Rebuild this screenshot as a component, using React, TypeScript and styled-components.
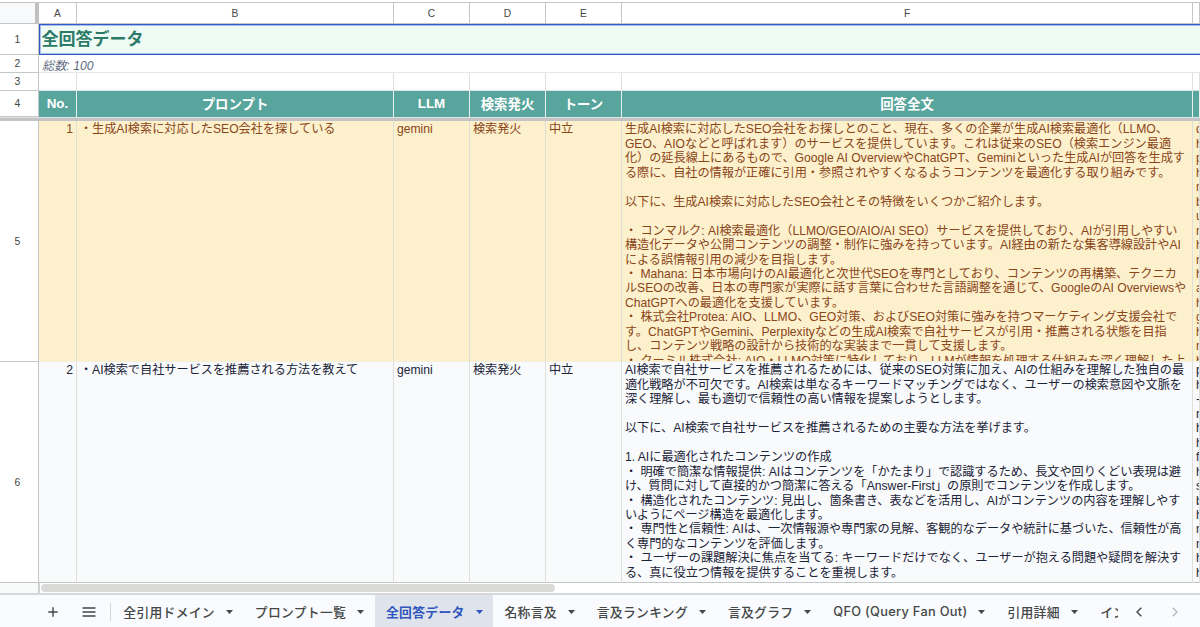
import React from 'react';
import styled, { createGlobalStyle, css } from 'styled-components';

const GlobalStyle = createGlobalStyle`
  * { box-sizing: border-box; }
  body { margin: 0; background: #fff; overflow: hidden; }
`;

const sans = `'Liberation Sans', 'Noto Sans CJK JP', sans-serif`;

const Sheet = styled.div`
  width: 1200px;
  height: 627px;
  overflow: hidden;
  display: flex;
  flex-direction: column;
  background: #fff;
  font-family: ${sans};
`;

const Row = styled.div<{ $h: number }>`
  display: grid;
  grid-template-columns: 39px 38px 317px 76px 76px 76px 571px 7px;
  grid-template-rows: 100%;
  height: ${(p) => p.$h}px;
  flex: none;
  overflow: hidden;
`;

const HeaderRow = styled(Row)`
  margin-top: 2px;
  border-top: 1px solid #c4c7c5;
`;

const Corner = styled.div`
  background: #f8f9fa;
  border-right: 4px solid #c0c0c0;
  border-bottom: 1px solid #c4c7c5;
`;

const ColumnHead = styled.div`
  display: flex;
  align-items: center;
  justify-content: center;
  font-size: 10.2px;
  color: #444746;
  border-right: 1px solid #c4c7c5;
  border-bottom: 1px solid #c4c7c5;
`;

const RowHead = styled.div<{ $drop?: number }>`
  display: flex;
  align-items: center;
  justify-content: center;
  font-size: 10.4px;
  line-height: 12px;
  color: #444746;
  padding: ${(p) => p.$drop ?? 0}px 3px 0 0;
  border-right: 1px solid #c4c7c5;
  border-bottom: 1px solid #c4c7c5;
`;

const TitleCell = styled.div`
  grid-column: 2 / -1;
  display: flex;
  align-items: center;
  background: #effcf5;
  border: solid #3259c7;
  border-width: 1px 0 1px 1px;
  box-shadow: inset 1px 1px 0 #a9c0ee, inset 0 -1px 0 #a9c0ee;
  padding: 0 0 4px 1.5px;
  color: #2c7a68;
  font-size: 17px;
  font-weight: 700;
`;

const SubtitleCell = styled.div`
  grid-column: 2 / -1;
  padding: 3px 0 0 3px;
  border-bottom: 1px solid #e6e7e8;
  color: #5f6b84;
  font-size: 12.2px;
  line-height: 16px;
  font-style: italic;
`;

const EmptyCell = styled.div`
  border-right: 1px solid #dfe0e1;
  border-bottom: 1px solid #dfe0e1;
`;

const HeadCell = styled.div`
  display: flex;
  align-items: center;
  justify-content: center;
  background: #58a59d;
  border-right: 1px solid #e6f0ef;
  padding-bottom: 2px;
  color: #fff;
  font-size: 13.4px;
  font-weight: 700;
  white-space: nowrap;
`;

const FreezeBar = styled.div`
  flex: none;
  height: 4px;
  background: #c2c3c4;
  border-top: 1px solid #dde3e2;
`;

type Tone = 'warm' | 'cool';

const tones = {
  warm: css`
    background: #fdf1cd;
    color: #8a4519;
  `,
  cool: css`
    background: #f8fafc;
    color: #1c2438;
  `,
};

const DataCell = styled.div<{ $tone: Tone; $right?: boolean }>`
  ${(p) => tones[p.$tone]}
  border-right: 1px solid #dfdfda;
  border-bottom: 1px solid ${(p) => (p.$tone === 'cool' ? '#c4c7c5' : '#f3eedd')};
  padding: 1.3px 3px 0 2.9px;
  font-size: 12.17px;
  line-height: 14.47px;
  text-align: ${(p) => (p.$right ? 'right' : 'left')};
  overflow: hidden;
  white-space: pre;
`;

const Line = styled.div`
  height: 14.47px;
`;

const ScrollTrack = styled.div`
  flex: none;
  display: flex;
  height: 12px;
  border-bottom: 2px solid #d5d7d9;
`;

const ScrollGutter = styled.div`
  width: 40px;
  border-right: 2px solid #cfd1d2;
  background: #f9fafa;
`;

const ScrollThumb = styled.div`
  width: 514px;
  height: 8px;
  margin: 1px 0 0 1px;
  border-radius: 4px;
  background: #dadbd9;
`;

const Tabs = styled.div`
  flex: 1;
  display: flex;
  background: #f9fbfe;
  color: #444746;
  font-family: Inter, 'Noto Sans CJK JP', sans-serif;
`;

const Tool = styled.div<{ $w: number; $left?: number }>`
  width: ${(p) => p.$w}px;
  margin-left: ${(p) => p.$left ?? 0}px;
  height: 34px;
  flex: none;
  display: flex;
  align-items: center;
  justify-content: center;
`;

const Divider = styled.div`
  width: 1px;
  height: 18px;
  margin: 8px 0.9px 0 2.5px;
  background: #d3d6da;
`;

const Tab = styled.div<{ $active?: boolean }>`
  display: flex;
  align-items: center;
  height: 33px;
  padding: 0 10.6px 0 11.4px;
  font-size: 12.8px;
  letter-spacing: 0.3px;
  font-weight: ${(p) => (p.$active ? 700 : 500)};
  color: ${(p) => (p.$active ? '#2f56bd' : '#444746')};
  background: ${(p) => (p.$active ? '#dfe4ec' : 'transparent')};
  white-space: nowrap;
`;

const Caret = styled.svg`
  margin-left: 10.9px;
  flex: none;
`;

const ClippedTab = styled.div`
  width: 29.5px;
  margin-right: 1.5px;
  flex: none;
  height: 33px;
  padding-left: 12px;
  display: flex;
  align-items: center;
  overflow: hidden;
  white-space: nowrap;
  font-size: 12.8px;
  font-weight: 500;
`;

const columns = ['A', 'B', 'C', 'D', 'E', 'F', ''];
const heads = ['No.', 'プロンプト', 'LLM', '検索発火', 'トーン', '回答全文', ''];

interface Answer {
  row: number;
  height: number;
  drop: number;
  tone: Tone;
  prompt: string;
  body: string[];
  next: string[];
}

const answers: Answer[] = [
  {
    row: 5,
    height: 241,
    drop: 2,
    tone: 'warm',
    prompt: '・生成AI検索に対応したSEO会社を探している',
    body: [
      '生成AI検索に対応したSEO会社をお探しとのこと、現在、多くの企業が生成AI検索最適化（LLMO、',
      'GEO、AIOなどと呼ばれます）のサービスを提供しています。これは従来のSEO（検索エンジン最適',
      '化）の延長線上にあるもので、Google AI OverviewやChatGPT、Geminiといった生成AIが回答を生成す',
      'る際に、自社の情報が正確に引用・参照されやすくなるようコンテンツを最適化する取り組みです。',
      '',
      '以下に、生成AI検索に対応したSEO会社とその特徴をいくつかご紹介します。',
      '',
      '・ コンマルク: AI検索最適化（LLMO/GEO/AIO/AI SEO）サービスを提供しており、AIが引用しやすい',
      '構造化データや公開コンテンツの調整・制作に強みを持っています。AI経由の新たな集客導線設計やAI',
      'による誤情報引用の減少を目指します。',
      '・ Mahana: 日本市場向けのAI最適化と次世代SEOを専門としており、コンテンツの再構築、テクニカ',
      'ルSEOの改善、日本の専門家が実際に話す言葉に合わせた言語調整を通じて、GoogleのAI Overviewsや',
      'ChatGPTへの最適化を支援しています。',
      '・ 株式会社Protea: AIO、LLMO、GEO対策、およびSEO対策に強みを持つマーケティング支援会社で',
      'す。ChatGPTやGemini、Perplexityなどの生成AI検索で自社サービスが引用・推薦される状態を目指',
      'し、コンテンツ戦略の設計から技術的な実装まで一貫して支援します。',
      '・ クーミル株式会社: AIO・LLMO対策に特化しており、LLMが情報を処理する仕組みを深く理解した上',
    ],
    next: ['d', 'h', 'p', 'h', 'n', 'b', 'u', 'n', 'h', 'n', 'h', 'a', 'h', 'g', 'h', 'n', 'h'],
  },
  {
    row: 6,
    height: 221,
    drop: 22,
    tone: 'cool',
    prompt: '・AI検索で自社サービスを推薦される方法を教えて',
    body: [
      'AI検索で自社サービスを推薦されるためには、従来のSEO対策に加え、AIの仕組みを理解した独自の最',
      '適化戦略が不可欠です。AI検索は単なるキーワードマッチングではなく、ユーザーの検索意図や文脈を',
      '深く理解し、最も適切で信頼性の高い情報を提案しようとします。',
      '',
      '以下に、AI検索で自社サービスを推薦されるための主要な方法を挙げます。',
      '',
      '1. AIに最適化されたコンテンツの作成',
      '・ 明確で簡潔な情報提供: AIはコンテンツを「かたまり」で認識するため、長文や回りくどい表現は避',
      'け、質問に対して直接的かつ簡潔に答える「Answer-First」の原則でコンテンツを作成します。',
      '・ 構造化されたコンテンツ: 見出し、箇条書き、表などを活用し、AIがコンテンツの内容を理解しやす',
      'いようにページ構造を最適化します。',
      '・ 専門性と信頼性: AIは、一次情報源や専門家の見解、客観的なデータや統計に基づいた、信頼性が高',
      'く専門的なコンテンツを評価します。',
      '・ ユーザーの課題解決に焦点を当てる: キーワードだけでなく、ユーザーが抱える問題や疑問を解決す',
      'る、真に役立つ情報を提供することを重視します。',
    ],
    next: ['p', 'h', '-', 'r', 'h', 'h', 'fi', 'h', 's', 'b', 'h', 'n', 'n', 'h', 'h'],
  },
];

const tabs = ['全引用ドメイン', 'プロンプト一覧', '全回答データ', '名称言及', '言及ランキング', '言及グラフ', 'QFO (Query Fan Out)', '引用詳細'];

const Lines = ({ items }: { items: string[] }) => (
  <>
    {items.map((t, i) => (
      <Line key={i}>{t}</Line>
    ))}
  </>
);

export default function App() {
  return (
    <Sheet>
      <GlobalStyle />
      <HeaderRow $h={22}>
        <Corner />
        {columns.map((c, i) => (
          <ColumnHead key={i}>{c}</ColumnHead>
        ))}
      </HeaderRow>
      <Row $h={31}>
        <RowHead $drop={2}>1</RowHead>
        <TitleCell>全回答データ</TitleCell>
      </Row>
      <Row $h={18}>
        <RowHead $drop={1}>2</RowHead>
        <SubtitleCell>総数: 100</SubtitleCell>
      </Row>
      <Row $h={18}>
        <RowHead $drop={1}>3</RowHead>
        {columns.map((_, i) => (
          <EmptyCell key={i} />
        ))}
      </Row>
      <Row $h={26}>
        <RowHead>4</RowHead>
        {heads.map((h, i) => (
          <HeadCell key={i}>{h}</HeadCell>
        ))}
      </Row>
      <FreezeBar />
      {answers.map((a, i) => (
        <Row key={a.row} $h={a.height}>
          <RowHead $drop={a.drop}>{a.row}</RowHead>
          <DataCell $tone={a.tone} $right>{i + 1}</DataCell>
          <DataCell $tone={a.tone}>{a.prompt}</DataCell>
          <DataCell $tone={a.tone}>gemini</DataCell>
          <DataCell $tone={a.tone}>検索発火</DataCell>
          <DataCell $tone={a.tone}>中立</DataCell>
          <DataCell $tone={a.tone}><Lines items={a.body} /></DataCell>
          <DataCell $tone={a.tone}><Lines items={a.next} /></DataCell>
        </Row>
      ))}
      <ScrollTrack>
        <ScrollGutter />
        <ScrollThumb />
      </ScrollTrack>
      <Tabs>
        <Tool $w={35} $left={35.5}>
          <svg width="10" height="10" viewBox="0 0 10 10" stroke="#444746" strokeWidth="1.4">
            <path d="M5 0.3V9.7M0.3 5H9.7" />
          </svg>
        </Tool>
        <Tool $w={37}>
          <svg width="14" height="10" viewBox="0 0 14 10" stroke="#444746" strokeWidth="1.3">
            <path d="M0.5 1H13.5M0.5 5H13.5M0.5 9H13.5" />
          </svg>
        </Tool>
        <Divider />
        {tabs.map((t) => (
          <Tab key={t} $active={t === '全回答データ'}>
            {t}
            <Caret width="7" height="4" viewBox="0 0 7 4" fill="currentColor">
              <path d="M0 0H7L3.5 4Z" />
            </Caret>
          </Tab>
        ))}
        <ClippedTab>イン</ClippedTab>
        <Tool $w={40}>
          <svg width="6" height="10" viewBox="0 0 6 10" fill="none" stroke="#444746" strokeWidth="1.4">
            <path d="M5.3 0.7L1 5L5.3 9.3" />
          </svg>
        </Tool>
        <Tool $w={32}>
          <svg width="6" height="10" viewBox="0 0 6 10" fill="none" stroke="#b4b7ba" strokeWidth="1.3">
            <path d="M0.7 0.7L5 5L0.7 9.3" />
          </svg>
        </Tool>
      </Tabs>
    </Sheet>
  );
}
